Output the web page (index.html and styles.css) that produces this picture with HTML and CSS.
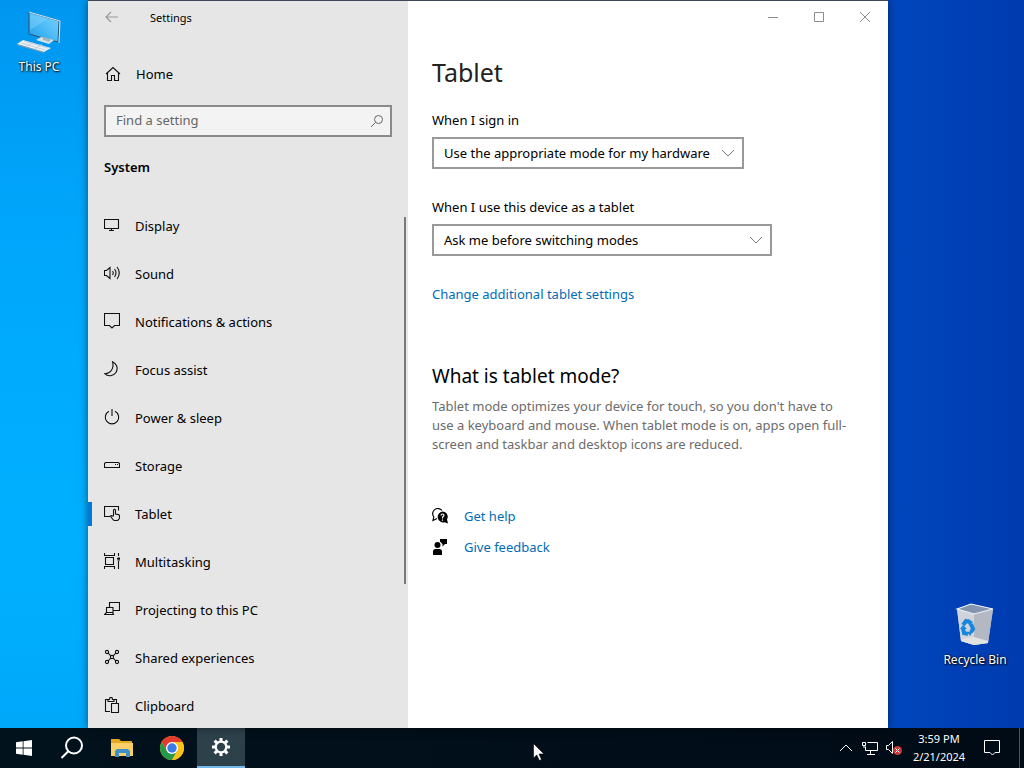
FILE: index.html
```html
<!DOCTYPE html>
<html lang="en">
<head>
<meta charset="utf-8">
<meta name="viewport" content="width=device-width, initial-scale=1">
<title>Settings</title>
<link rel="stylesheet" href="styles.css">
</head>
<body class="screen">
<main class="desktop">
  <a class="shortcut shortcut-pc" href="#pc">
    <svg width="44" height="44" viewBox="0 0 44 44">
      <defs><linearGradient id="scr" x1="0" y1="1" x2="1" y2="0"><stop offset="0" stop-color="#1d9bea"/><stop offset=".5" stop-color="#4dbcf7"/><stop offset="1" stop-color="#7fd0fb"/></linearGradient></defs>
      <path d="M12 2l30 9-1 21-29-8z" fill="url(#scr)" stroke="#34526a" stroke-width="1"/>
      <path d="M12 2l31 9-1 22" fill="none" stroke="#cfe9f8" stroke-width="1"/>
      <path d="M13 4L31 9 13 20z" fill="#8fd5fa" opacity=".4"/>
      <path d="M19 30l5-3 13 3-5 4z" fill="#d5e2ea"/><path d="M26 27l7 2v3l-7-2z" fill="#9fb4c2"/>
      <path d="M0 34l6-4 28 8-7 4z" fill="#e9eff3"/><path d="M0 34l27 8v1L0 35z" fill="#8ba0ae"/>
      <path d="M4 33l24 7M7 31l24 7M9 37l7-5M18 39l7-5" stroke="#b4c4ce" stroke-width=".7"/>
    </svg>
    <span>This PC</span>
  </a>
  <a class="shortcut shortcut-bin" href="#bin">
    <svg width="44" height="44" viewBox="0 0 44 44">
      <path d="M4 6l14-5 22 5-5 34-14 2-13-4z" fill="#c9ced6"/>
      <path d="M4 6l17 5v31L8 38z" fill="#cfd4dc"/>
      <path d="M21 11l19-5-5 34-14 2z" fill="#b3b8c2"/>
      <path d="M8 36l13-2 14 4v2l-14 2-13-4z" fill="#e2e2e0"/>
      <path d="M4 6l14-5 22 5-19 5z" fill="#8595ad" stroke="#eef2f6" stroke-width="1.2"/>
      <g fill="none" stroke="#1686dc" stroke-width="4"><path d="M10 22l3-4 4 1"/><path d="M18 21l2 5-2 3"/><path d="M15 31l-4-1-1-5"/></g>
      <path d="M15 16l5 3-4 4zM20 28l-3 5-3-4zM7 26l3-4 4 4z" fill="#1686dc"/>
    </svg>
    <span>Recycle Bin</span>
  </a>

  <section class="window">
    <aside class="sidebar">
      <header class="titlebar">
        <button class="back" aria-label="Back"><svg width="14" height="12" viewBox="0 0 14 12"><path d="M13 6H1M6 1L1 6l5 5"/></svg></button>
        <span class="title">Settings</span>
      </header>
      <a class="home" href="#home">
        <svg class="icon" width="16" height="16" viewBox="0 0 16 16"><path d="M1 8l7-6.5L15 8M2.500 7v7.500h4v-5h3v5h4V7"/></svg>
        <span>Home</span>
      </a>
      <div class="search">
        <input type="search" aria-label="Find a setting" placeholder="Find a setting">
        <svg width="14" height="14" viewBox="0 0 14 14"><circle cx="8.500" cy="5.500" r="4"/><path d="M5.500 8.500L1 13"/></svg>
      </div>
      <h2 class="group">System</h2>
      <nav class="nav">
        <a href="#display"><svg class="icon" width="16" height="16" viewBox="0 0 16 16"><path d="M.5 2.500h14v9H.5zM7.500 11.500v2M5 13.500h5"/></svg><span>Display</span></a>
        <a href="#sound"><svg class="icon" width="16" height="16" viewBox="0 0 16 16"><path d="M.5 5.500h2l3.500-3v11l-3.500-3h-2zM8.500 6q1.500 2 0 4M10.500 4q3 4 0 8M13 2q4.500 6 0 12"/></svg><span>Sound</span></a>
        <a href="#notifications"><svg class="icon" width="16" height="16" viewBox="0 0 16 16"><path d="M.5.500h15v12h-5L8 15l-2.500-2.500h-5z"/></svg><span>Notifications &amp; actions</span></a>
        <a href="#focus"><svg class="icon" width="16" height="16" viewBox="0 0 16 16"><path d="M8.500.7a7.300 7.300 0 1 1-7.800 12C6 13 10.500 8 8.500.7z"/></svg><span>Focus assist</span></a>
        <a href="#power"><svg class="icon" width="16" height="16" viewBox="0 0 16 16"><path d="M8 0v7M5 2.200a6.700 6.700 0 1 0 6 0"/></svg><span>Power &amp; sleep</span></a>
        <a href="#storage"><svg class="icon" width="16" height="16" viewBox="0 0 16 16"><path d="M1.500 5.500h13l1 1v4h-15v-4zM11 7.500h1M13 7.500h1"/></svg><span>Storage</span></a>
        <a class="current" aria-current="page" href="#tablet"><svg class="icon" width="16" height="16" viewBox="0 0 16 16"><path d="M6 11.500H.5v-10h14v4"/><path d="M9.500 11V5.300a1 1 0 0 1 2 0V9l3 .6q1 .3 1 1.400v1.500a3 3 0 0 1-3 3h-1.500q-1.500 0-2.500-1.500l-2-3q1-1 2 0z"/></svg><span>Tablet</span></a>
        <a href="#multitasking"><svg class="icon" width="16" height="16" viewBox="0 0 16 16"><path d="M.5 0v2.500h10V0M.5 16v-2.500h10V16M1.500 4.500h8v7h-8zM14.500 0v3M14.500 8v8M13 5.500h3"/><path d="M14 5h2v2h-2z"/></svg><span>Multitasking</span></a>
        <a href="#projecting"><svg class="icon" width="16" height="16" viewBox="0 0 16 16"><path d="M5.500 6V1.500h10v8H9M2.500 6.500H9v5H2.500zM2.500 11.500l-2 2h9l-1-2"/></svg><span>Projecting to this PC</span></a>
        <a href="#shared"><svg class="icon" width="16" height="16" viewBox="0 0 16 16"><circle cx="3" cy="3" r="1.600"/><circle cx="13" cy="3" r="1.600"/><circle cx="3" cy="13" r="1.600"/><circle cx="13" cy="13" r="1.600"/><circle cx="8" cy="8" r="1.600"/><path d="M4.200 4.200l2.600 2.600M11.800 4.200L9.200 6.800M4.200 11.800l2.600-2.600M11.800 11.800L9.200 9.200"/></svg><span>Shared experiences</span></a>
        <a href="#clipboard"><svg class="icon" width="16" height="16" viewBox="0 0 16 16"><path d="M6 14.500H1.500v-12H4M10 2.500h2.500V6M4 4.500v-2h1.500L6 .5h2l.5 2H10v2zM7.500 6.500h7v9h-7z"/></svg><span>Clipboard</span></a>
      </nav>
      <div class="thumb"></div>
    </aside>

    <div class="content">
      <header class="controls">
        <button aria-label="Minimize"><svg width="12" height="12" viewBox="0 0 12 12"><path d="M1 6.500h10"/></svg></button>
        <button aria-label="Maximize"><svg width="12" height="12" viewBox="0 0 12 12"><path d="M1.500 1.500h9v9h-9z"/></svg></button>
        <button aria-label="Close"><svg width="12" height="12" viewBox="0 0 12 12"><path d="M1 1l10 10M11 1L1 11"/></svg></button>
      </header>
      <div class="page">
        <h1>Tablet</h1>
        <label for="signin">When I sign in</label>
        <div class="drop drop-signin">
          <select id="signin"><option>Use the appropriate mode for my hardware</option></select>
          <svg width="14" height="8" viewBox="0 0 14 8"><path d="M1 1l6 6 6-6"/></svg>
        </div>
        <label for="tablet">When I use this device as a tablet</label>
        <div class="drop drop-tablet">
          <select id="tablet"><option>Ask me before switching modes</option></select>
          <svg width="14" height="8" viewBox="0 0 14 8"><path d="M1 1l6 6 6-6"/></svg>
        </div>
        <a class="link" href="#more">Change additional tablet settings</a>
        <h3>What is tablet mode?</h3>
        <p>Tablet mode optimizes your device for touch, so you don't have to use a keyboard and mouse. When tablet mode is on, apps open full-screen and taskbar and desktop icons are reduced.</p>
        <div class="support">
          <a class="link" href="#help"><svg width="16" height="16" viewBox="0 0 16 16"><path d="M5 10.500L1 12.500l.8-3.500A5 5 0 1 1 10 2.500" fill="none" stroke="#000" stroke-width="1.200"/><path d="M10.500 3.500a5.300 5.300 0 0 1 4.500 8l1 4-3.500-1.200a5.500 5.500 0 1 1-2-10.800z" fill="#000"/><path d="M9 7.500q0-1.500 1.500-1.500t1.500 1.300q0 .9-1.500 1.700v1.500M10.500 11.500v1.200" fill="none" stroke="#fff" stroke-width="1.200"/></svg><span>Get help</span></a>
          <a class="link" href="#feedback"><svg width="16" height="16" viewBox="0 0 16 16"><circle cx="5.500" cy="6" r="3"/><path d="M1 16v-3.500q0-2.500 2.500-2.500h4q2.500 0 2.500 2.500V16zM8 0h7v5h-2l-2.500 2.500V5L8 2.500z"/></svg><span>Give feedback</span></a>
        </div>
      </div>
    </div>
  </section>
</main>

<footer class="taskbar">
  <div class="apps">
    <button aria-label="Start"><svg width="16" height="16" viewBox="0 0 16 16" fill="#fff"><path d="M0 2.300L6.700 1.300v6.200H0zM7.500 1.200L16 0v7.500H7.500zM0 8.400h6.700v6.300L0 13.700zM7.500 8.400H16V16l-8.500-1.200z"/></svg></button>
    <button aria-label="Search"><svg width="24" height="24" viewBox="0 0 24 24" fill="none" stroke="#fff" stroke-width="2"><circle cx="14" cy="9.500" r="8"/><path d="M8.300 15.200L1.500 22"/></svg></button>
    <button class="pinned" aria-label="File Explorer"><svg width="22" height="18" viewBox="0 0 22 18"><path d="M0 0h8l2 2h11v15H0z" fill="#e5a823"/><path d="M0 4h22v13H0z" fill="#f8d067"/><path d="M4 18v-6l2-2h11l2 2v6h-4v-4H8v4z" fill="#3f8fc9"/></svg></button>
    <button class="pinned" aria-label="Chrome"><svg width="24" height="24" viewBox="0 0 24 24"><circle cx="12" cy="12" r="12" fill="#fbc116"/><path d="M1.610 6A12 12 0 0 1 22.390 6H12L6.800 15z" fill="#e33b2e"/><path d="M1.610 6A12 12 0 0 0 12 24l5.200-9L12 12 6.800 15z" fill="#229a4a"/><path d="M12 24l5.200-9A6 6 0 0 0 17.200 9L12 6h10.390A12 12 0 0 1 12 24z" fill="#fbc116"/><circle cx="12" cy="12" r="6" fill="#fff"/><circle cx="12" cy="12" r="4.700" fill="#3a7bea"/></svg></button>
    <button class="active" aria-label="Settings"><svg width="20" height="20" viewBox="0 0 20 20"><g stroke="#fff" stroke-width="3"><path d="M10 1v18M1 10h18M3.600 3.600l12.800 12.800M16.400 3.600L3.600 16.400"/></g><circle cx="10" cy="10" r="6.500" fill="#fff"/><circle cx="10" cy="10" r="4.200" fill="#2d414b"/></svg></button>
  </div>
  <div class="tray">
    <button aria-label="Show hidden icons"><svg width="14" height="8" viewBox="0 0 14 8"><path d="M1 7l6-6 6 6"/></svg></button>
    <button aria-label="Network"><svg width="16" height="14" viewBox="0 0 16 14"><path d="M5.500 1.500h10v8h-12v-4M8.500 9.500v3.500M5 13.500h8M.5 1.500h3v3h-3zM2 5v2"/></svg></button>
    <button aria-label="Volume muted"><svg width="16" height="16" viewBox="0 0 16 16"><path d="M.5 5.500h2L6.500 1.500v12l-4-4h-2z"/><circle cx="11.500" cy="10.500" r="4.500" fill="#c43a3a" stroke="none"/><path d="M9.500 8.500l4 4M13.500 8.500l-4 4"/></svg></button>
    <div class="clock"><span>3:59 PM</span><span>2/21/2024</span></div>
    <button class="action" aria-label="Action center"><svg width="16" height="16" viewBox="0 0 16 16"><path d="M.5.500h15v12h-4.500l-2.500 2.500-2.500-2.500H.5z"/></svg></button>
    <button class="show-desktop" aria-label="Show desktop"></button>
  </div>
</footer>
<svg class="cursor" width="12" height="18" viewBox="0 0 12 18"><path d="M.5.500v14.500l3.300-3 2.500 5.500 2.200-1L6 11h5z" fill="#fff" stroke="#000" stroke-width=".6"/></svg>
</body>
</html>
```
FILE: styles.css
```css
* { box-sizing: border-box; }

.screen {
  margin: 0;
  height: 100vh;
  display: grid;
  grid-template-rows: minmax(0, 1fr) 40px;
  overflow: hidden;
  font-family: "Noto Sans", "Open Sans", sans-serif;
  font-size: 13px;
  line-height: 20px;
  color: #000;
}

button { border: 0; padding: 0; background: none; display: flex; align-items: center; justify-content: center; }
a { color: inherit; text-decoration: none; }
h1, h2, h3, p { margin: 0; }
svg { flex: none; }

.desktop {
  position: relative;
  background:
    linear-gradient(180deg, #0096f0 0, #00a6fb 30%, #00b0ff 75%, #00a8fa 100%) 0 0 / 50% 100% no-repeat,
    linear-gradient(90deg, #0046bc 87%, #003fb6 94%, #003cb0 100%);
}

.shortcut {
  position: absolute;
  width: 76px;
  display: flex;
  flex-direction: column;
  align-items: center;
  gap: 4px;
  font-size: 12px;
  line-height: 18px;
  color: #fff;
  text-shadow: 1px 1px 2px #000, 0 0 2px #000;
  white-space: nowrap;
}
.shortcut-pc { left: 1px; top: 10px; }
.shortcut-bin { right: 11px; bottom: 59px; }

.window {
  position: absolute;
  left: 88px;
  right: 136px;
  top: 0;
  bottom: 0;
  display: grid;
  grid-template-columns: 320px minmax(0, 1fr);
  border-top: 1px solid #3c4657;
  background: #fff;
  box-shadow: 0 0 8px rgba(0, 0, 0, .5);
}

.sidebar {
  position: relative;
  background: #e6e6e6;
  display: flex;
  flex-direction: column;
  min-height: 0;
  overflow: hidden;
}
.titlebar { display: flex; align-items: center; height: 32px; flex: none; }
.back { width: 48px; height: 32px; }
.back svg { fill: none; stroke: #999; stroke-width: 1.2; }
.title { padding: 1px 0 0 14px; font-size: 11px; }

.icon { fill: none; stroke: #111; stroke-width: 1.1; }
.home { display: flex; align-items: center; gap: 15px; height: 48px; margin-top: 17px; padding-left: 17px; flex: none; }
.search { position: relative; margin: 7px 16px 0; flex: none; }
.search input {
  display: block;
  width: 100%;
  height: 32px;
  border: 2px solid #8a8a8a;
  border-radius: 0;
  padding: 0 36px 2px 10px;
  background: #f3f3f3;
  font: inherit;
  outline: 0;
}
.search input::placeholder { color: #666; opacity: 1; }
.search svg { position: absolute; right: 8px; top: 9px; fill: none; stroke: #666; }
.group { margin: 20px 16px 25px; font-size: 13px; font-weight: 600; flex: none; }

.nav { flex: 1; min-height: 0; overflow: hidden; }
.nav a { display: flex; align-items: center; gap: 15px; height: 48px; padding-left: 16px; }
.nav .icon { margin-bottom: 2px; }
.nav .current { background: linear-gradient(#0078d7, #0078d7) 0 50% / 4px 24px no-repeat; }
.thumb { position: absolute; right: 2px; top: 216px; width: 2px; height: 367px; background: #7a7a7a; }

.content { min-width: 0; }
.controls { display: flex; justify-content: flex-end; height: 32px; }
.controls button { width: 46px; height: 32px; }
.controls svg { fill: none; stroke: #8c8c8c; }

.page { padding: 21px 24px 0; display: flex; flex-direction: column; align-items: flex-start; }
h1 { font-size: 25px; line-height: 36px; font-weight: 400; color: #222; }
.page label { margin-top: 20px; margin-bottom: 7px; }
.drop { position: relative; max-width: 100%; }
.drop + label { margin-top: 28px; }
.drop-signin { width: 312px; }
.drop-tablet { width: 340px; }
.drop select {
  appearance: none;
  display: block;
  width: 100%;
  height: 32px;
  border: 2px solid #999;
  border-radius: 0;
  padding: 0 28px 0 10px;
  background: #fff;
  color: #000;
  font: inherit;
}
.drop svg { position: absolute; right: 9px; top: 12px; fill: none; stroke: #777; pointer-events: none; }
.link { color: #006cb8; }
.drop + .link { margin-top: 28px; }
h3 { margin-top: 58px; font-size: 19px; line-height: 28px; font-weight: 400; }
.page p { max-width: 424px; margin-top: 7px; line-height: 19px; color: #6c6c6c; }
.support { display: flex; flex-direction: column; gap: 11px; margin-top: 52px; }
.support .link { display: flex; align-items: center; gap: 16px; }

.taskbar { display: flex; justify-content: space-between; background: linear-gradient(90deg, #02121d, #000b16); }
.apps, .tray { display: flex; }
.apps button { width: 48px; height: 40px; }
.apps .pinned { margin-left: 2px; }
.apps .active { margin-left: 1px; background: #2d414b; border-bottom: 2px solid #76b9ed; }
.tray { color: #fff; font-size: 11px; }
.tray button { width: 24px; height: 40px; }
.tray svg { fill: none; stroke: #fff; }
.clock { display: flex; flex-direction: column; justify-content: center; align-items: center; width: 66px; line-height: 18px; }
.tray .action { width: 39px; margin-right: 8px; }
.tray .show-desktop { width: 5px; border-left: 1px solid #4a5560; }

.cursor { position: absolute; left: 533px; top: 743px; }
```
